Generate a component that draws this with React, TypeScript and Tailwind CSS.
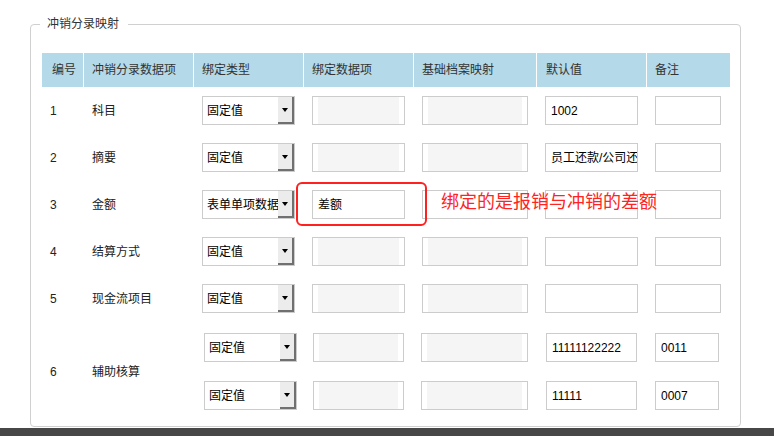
import React from "react";

const COLS = "grid grid-cols-[41px_110px_110px_110px_123px_110px_83px]";

function Select({ value, shift = false }: { value: string; shift?: boolean }) {
  return (
    <div
      className={
        "flex h-[29px] w-[93px] items-stretch border border-[#cccccc] bg-white " +
        (shift ? "ml-[2px]" : "")
      }
    >
      <span className="flex flex-1 items-center overflow-hidden whitespace-nowrap pl-[4px] text-[12px] text-black">
        {value}
      </span>
      <div className="flex w-[16px] shrink-0 items-center justify-center border-r-2 border-b-2 border-r-[#707070] border-b-[#707070] bg-[#ececec]">
        <svg width="6" height="4" viewBox="0 0 6 4">
          <path d="M0 0H6L3 4Z" fill="#000" />
        </svg>
      </div>
    </div>
  );
}

function Disabled({ w }: { w: string }) {
  return (
    <div className={"h-[29px] border border-[#cccccc] bg-white px-[5px] " + w}>
      <div className="h-full bg-[#f5f5f5]" />
    </div>
  );
}

function TextInput({ w, value = "" }: { w: string; value?: string }) {
  return (
    <div
      className={
        "flex h-[29px] items-center overflow-hidden whitespace-nowrap border border-[#cccccc] bg-white px-[5px] text-[12px] text-black " +
        w
      }
    >
      {value}
    </div>
  );
}

type Row = {
  no: string;
  name: string;
  type: string;
  def: string;
};

const rows: Row[] = [
  { no: "1", name: "科目", type: "固定值", def: "1002" },
  { no: "2", name: "摘要", type: "固定值", def: "员工还款/公司还款" },
  { no: "3", name: "金额", type: "表单单项数据", def: "" },
  { no: "4", name: "结算方式", type: "固定值", def: "" },
  { no: "5", name: "现金流项目", type: "固定值", def: "" },
];

export default function App() {
  return (
    <div className="flex h-[436px] w-[774px] flex-col overflow-hidden bg-white font-['Liberation_Sans','Noto_Sans_CJK_SC',sans-serif] text-[12px] text-[#333]">
      <div className="pl-[30px] pt-[16px]">
        <fieldset className="w-[711px] rounded-[4px] border border-[#d0d0d0] pb-[5px] pl-[11px] pr-[10px] pt-[21px]">
          <legend className="ml-[-2px] pl-[7px] pr-[9px] text-[12px] leading-[16px] text-[#333]">
            冲销分录映射
          </legend>

          {/* header */}
          <div className={COLS + " h-[34px] items-stretch bg-[#b4d9e8] text-[#333]"}>
            <div className="flex items-center pl-[10px]">编号</div>
            <div className="flex items-center border-l border-white pl-[8px]">冲销分录数据项</div>
            <div className="flex items-center border-l border-white pl-[8px]">绑定类型</div>
            <div className="flex items-center border-l border-white pl-[8px]">绑定数据项</div>
            <div className="flex items-center border-l border-white pl-[8px]">基础档案映射</div>
            <div className="flex items-center border-l border-white pl-[9px]">默认值</div>
            <div className="flex items-center border-l border-white pl-[8px]">备注</div>
          </div>

          {rows.map((r) => (
            <div key={r.no} className={COLS + " h-[47px] items-center"}>
              <div className="pl-[8px] text-[#222]">{r.no}</div>
              <div className="pl-[9px] text-[#222]">{r.name}</div>
              <div className="pl-[9px]">
                <Select value={r.type} />
              </div>
              {r.no === "3" ? (
                <div className="relative pl-[9px]">
                  <TextInput w="w-[93px]" value="差额" />
                  <div className="absolute left-[-7px] top-[-8px] h-[44px] w-[131px] rounded-[6px] border-2 border-[#ff2020]" />
                  <div className="absolute left-[138px] top-[0px] z-10 whitespace-nowrap text-[18px] leading-[24px] text-[#ff2424]">
                    绑定的是报销与冲销的差额
                  </div>
                </div>
              ) : (
                <div className="pl-[9px]">
                  <Disabled w="w-[93px]" />
                </div>
              )}
              <div className="pl-[9px]">
                {r.no === "3" ? <TextInput w="w-[106px]" /> : <Disabled w="w-[106px]" />}
              </div>
              <div className="pl-[9px]">
                <TextInput w="w-[93px]" value={r.def} />
              </div>
              <div className="pl-[9px]">
                <TextInput w="w-[66px]" />
              </div>
            </div>
          ))}

          {/* row 6 */}
          <div className={COLS + " items-stretch py-[11px]"}>
            <div className="flex items-center pl-[8px] text-[#222]">6</div>
            <div className="flex items-center pl-[9px] text-[#222]">辅助核算</div>
            <div className="flex flex-col gap-[19px] pl-[9px]">
              <Select value="固定值" shift />
              <Select value="固定值" shift />
            </div>
            <div className="flex flex-col gap-[19px] pl-[10px]">
              <Disabled w="w-[91px]" />
              <Disabled w="w-[91px]" />
            </div>
            <div className="flex flex-col gap-[19px] pl-[8px]">
              <Disabled w="w-[107px]" />
              <Disabled w="w-[107px]" />
            </div>
            <div className="flex flex-col gap-[19px] pl-[10px]">
              <TextInput w="w-[91px]" value="11111122222" />
              <TextInput w="w-[91px]" value="11111" />
            </div>
            <div className="flex flex-col gap-[19px] pl-[9px]">
              <TextInput w="w-[64px]" value="0011" />
              <TextInput w="w-[64px]" value="0007" />
            </div>
          </div>
        </fieldset>
      </div>
      <div className="mt-auto h-[8px] w-full bg-[#474747]" />
    </div>
  );
}
